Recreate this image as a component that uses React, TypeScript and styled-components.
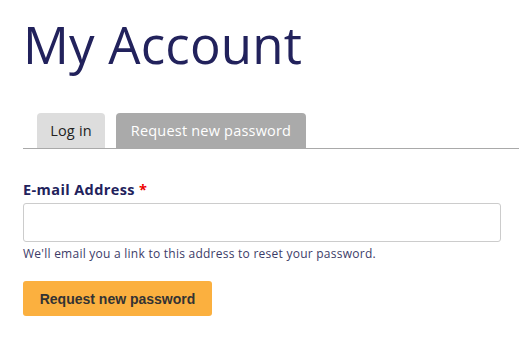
import React from "react";
import styled, { createGlobalStyle } from "styled-components";

const Global = createGlobalStyle`
  html, body { margin: 0; padding: 0; background: #fff; }
  body { font-family: "Open Sans", "Liberation Sans", sans-serif; }
`;

const Page = styled.div`
  padding: 14px 0 0 23px;
`;

const Title = styled.h1`
  margin: 0;
  font-family: "Open Sans", sans-serif;
  font-weight: 400;
  font-size: 51px;
  line-height: 60px;
  color: #22225c;
  letter-spacing: 0.2px;
`;

const TabList = styled.div`
  display: flex;
  gap: 11px;
  margin-top: 39px;
  padding-left: 14px;
  border-bottom: 1px solid #a9a9a9;
`;

const Tab = styled.div<{ $active?: boolean; $width: number }>`
  box-sizing: border-box;
  width: ${(p) => p.$width}px;
  height: 35px;
  display: flex;
  align-items: center;
  justify-content: center;
  border-radius: 4px 4px 0 0;
  background: ${(p) => (p.$active ? "#aaaaaa" : "#dddddd")};
  color: ${(p) => (p.$active ? "#ffffff" : "#222")};
  font-size: 14.5px;
  letter-spacing: 0.2px;
`;

const Form = styled.form`
  padding-top: 32px;
`;

const Label = styled.label`
  display: block;
  font-weight: 700;
  font-size: 14.5px;
  line-height: 18px;
  letter-spacing: 0.4px;
  color: #22225c;
`;

const Req = styled.span`
  color: #e00;
`;

const Input = styled.input`
  display: block;
  box-sizing: border-box;
  margin-top: 4px;
  width: 478px;
  height: 39px;
  border: 1px solid #cccccc;
  border-radius: 3px;
  outline: none;
`;

const Help = styled.div`
  margin-top: 4px;
  font-size: 12px;
  line-height: 16px;
  letter-spacing: 0.25px;
  color: #3c3c68;
`;

const Button = styled.button`
  display: block;
  margin-top: 19px;
  width: 189px;
  height: 35px;
  border: none;
  border-radius: 3px;
  background: #fbb03f;
  color: #333;
  font-family: "Liberation Sans", Arial, sans-serif;
  font-weight: 700;
  font-size: 14px;
`;

export default function App() {
  return (
    <Page>
      <Global />
      <Title>My Account</Title>
      <TabList>
        <Tab $width={68}>Log in</Tab>
        <Tab $active $width={190}>
          Request new password
        </Tab>
      </TabList>
      <Form>
        <Label>
          E-mail Address <Req>*</Req>
        </Label>
        <Input type="email" />
        <Help>We'll email you a link to this address to reset your password.</Help>
        <Button type="button">Request new password</Button>
      </Form>
    </Page>
  );
}
